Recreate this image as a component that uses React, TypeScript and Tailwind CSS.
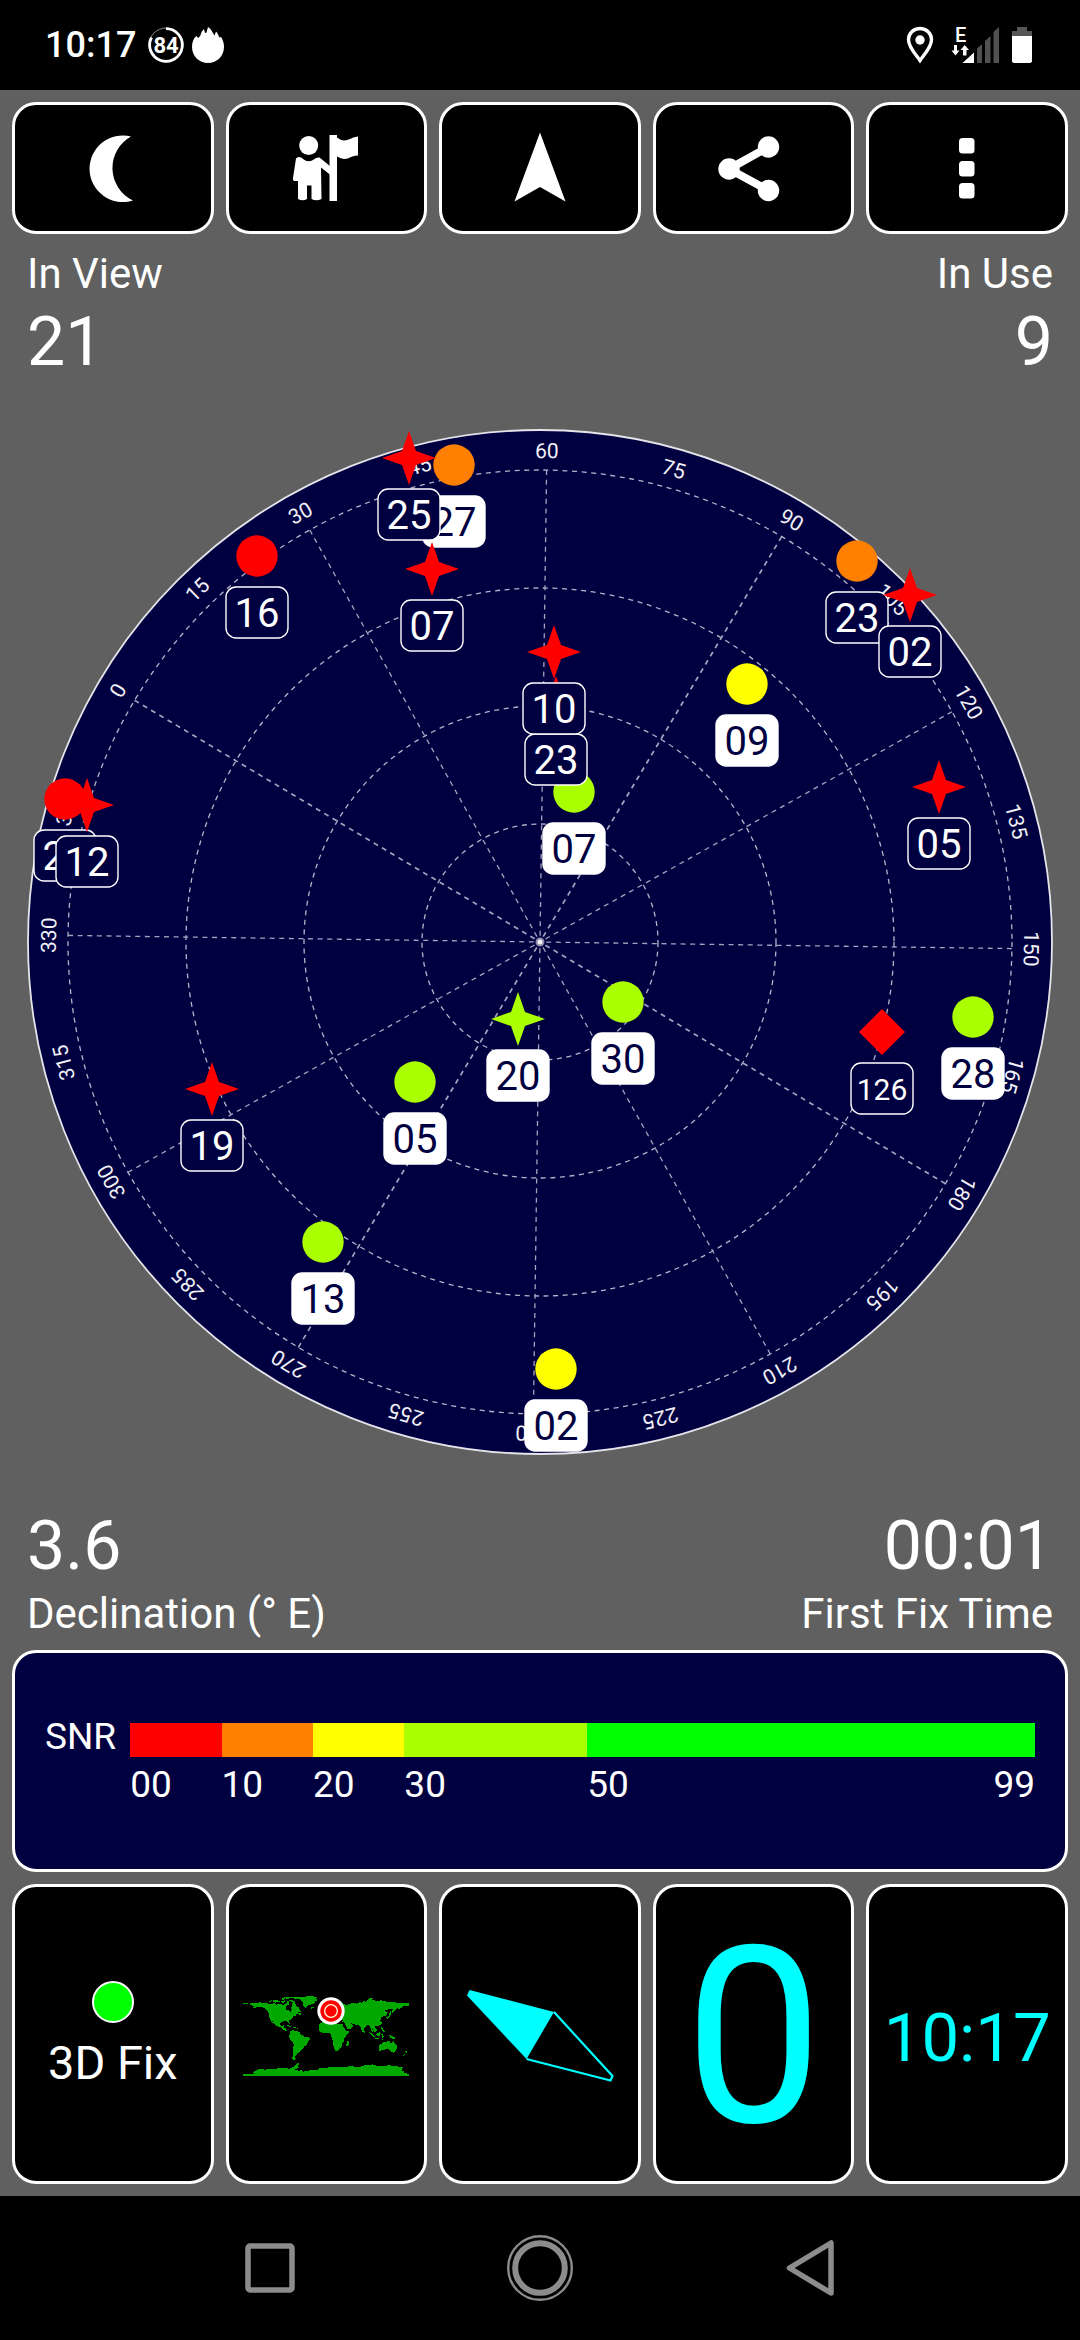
import React from "react";

type Shape = "circle" | "star" | "diamond";

interface Satellite {
  id: string;
  x: number;
  y: number;
  shape: Shape;
  color: string;
  used?: boolean;
}

const RED = "#ff0000";
const ORANGE = "#ff8000";
const YELLOW = "#ffff00";
const LIME = "#aaff00";
const NAVY = "#000040";

// Offsets from the dial centre, in drawing order.
const satellites: Satellite[] = [
  { id: "16", x: -283, y: -386, shape: "circle", color: RED },
  { id: "27", x: -86, y: -477, shape: "circle", color: ORANGE, used: true },
  { id: "25", x: -131, y: -484, shape: "star", color: RED },
  { id: "07", x: -108, y: -373, shape: "star", color: RED },
  { id: "24", x: -475, y: -143, shape: "circle", color: RED },
  { id: "12", x: -453, y: -137, shape: "star", color: RED },
  { id: "07", x: 34, y: -150, shape: "circle", color: LIME, used: true },
  { id: "23", x: 16, y: -239, shape: "star", color: RED },
  { id: "10", x: 14, y: -290, shape: "star", color: RED },
  { id: "09", x: 207, y: -258, shape: "circle", color: YELLOW, used: true },
  { id: "23", x: 317, y: -381, shape: "circle", color: ORANGE },
  { id: "02", x: 370, y: -347, shape: "star", color: RED },
  { id: "05", x: 399, y: -155, shape: "star", color: RED },
  { id: "20", x: -22, y: 77, shape: "star", color: LIME, used: true },
  { id: "30", x: 83, y: 60, shape: "circle", color: LIME, used: true },
  { id: "05", x: -125, y: 140, shape: "circle", color: LIME, used: true },
  { id: "13", x: -217, y: 300, shape: "circle", color: LIME, used: true },
  { id: "19", x: -328, y: 147, shape: "star", color: RED },
  { id: "126", x: 342, y: 90, shape: "diamond", color: RED },
  { id: "28", x: 433, y: 75, shape: "circle", color: LIME, used: true },
  { id: "02", x: 16, y: 427, shape: "circle", color: YELLOW, used: true },
];

const HEADING = -59.2;
const rings = [118, 236, 354, 472];
const spokes = Array.from({ length: 12 }, (_, i) => i * 30);
const ticks = Array.from({ length: 24 }, (_, i) => i * 15);

function Marker({ sat }: { sat: Satellite }) {
  const small = sat.id.length > 2;
  return (
    <g transform={`translate(${sat.x} ${sat.y})`}>
      {sat.shape === "circle" && <circle r="20.7" fill={sat.color} />}
      {sat.shape === "star" && (
        <path d="M0-27 7-7 27 0 7 7 0 27-7 7-27 0-7-7Z" fill={sat.color} />
      )}
      {sat.shape === "diamond" && <path d="M0-23 23 0 0 23-23 0Z" fill={sat.color} />}
      <rect
        x="-31"
        y="31"
        width="62"
        height="51"
        rx="10"
        fill={sat.used ? "#ffffff" : NAVY}
        stroke="#ffffff"
        strokeWidth="1.4"
      />
      <text
        y={small ? 68 : 71}
        textAnchor="middle"
        fontSize={small ? 30 : 40}
        fill={sat.used ? NAVY : "#ffffff"}
      >
        {sat.id}
      </text>
    </g>
  );
}

function SkyDial() {
  return (
    <svg
      viewBox="-540 -556 1080 1116"
      className="block w-full"
      role="img"
      aria-label="Satellite sky view"
    >
      <circle r="512" fill={NAVY} stroke="#e4e4ea" strokeWidth="1.8" />
      <g fill="none" stroke="#b4b4cc" strokeWidth="1.3" strokeDasharray="5 4.6">
        {rings.map((r) => (
          <circle key={r} r={r} />
        ))}
      </g>
      <g stroke="#a4a4c0" strokeDasharray="5 4.6">
        {spokes.map((a) => (
          <line
            key={a}
            y1="-472"
            strokeWidth={a % 90 === 0 ? 1.7 : 1.3}
            transform={`rotate(${a + HEADING})`}
          />
        ))}
      </g>
      <circle r="4.5" fill="#8c8cac" />
      <circle r="2.5" fill="#f0f0f4" />
      <g fill="#f0f0f6" fontSize="21" textAnchor="middle">
        {ticks.map((a) => (
          <text key={a} y="-484" transform={`rotate(${a + HEADING})`}>
            {a}
          </text>
        ))}
      </g>
      {satellites.map((s, i) => (
        <Marker key={i} sat={s} />
      ))}
    </svg>
  );
}

function StatusBar() {
  return (
    <header className="flex h-[90px] items-center justify-between bg-black pr-12 pl-[45px]">
      <div className="flex items-center">
        <span className="text-[36px] leading-[42px] font-medium">10:17</span>
        <svg className="ml-3 h-9 w-9" viewBox="0 0 36 36" role="img" aria-label="Battery 84 percent">
          <circle cx="18" cy="18" r="17" fill="none" stroke="#aaa" strokeWidth="0.8" />
          <path d="M18 1.7A16.3 16.3 0 1 1 3.5 10.5" fill="none" stroke="#fff" strokeWidth="2.8" />
          <text x="18" y="26" textAnchor="middle" fontSize="22" fontWeight="700" fill="#fff">
            84
          </text>
        </svg>
        <svg className="ml-2 h-9 w-8" viewBox="0 0 32 36" fill="#fff" aria-hidden="true">
          <path d="M16 36C7 36 0 29 0 20C0 15 1.500 11 4.500 9L6 11C8 10 9 7.500 9.500 5L12 2L13 6L14.500 5.500L16 0C19.500 2 20.500 5.500 22.500 8.500L24 4.500C26 6 26 8 27.500 10.500L29 10C31 13 32 16 32 20C32 29 25 36 16 36Z" />
        </svg>
      </div>
      <div className="flex items-center">
        <svg className="h-[38px] w-[28px]" viewBox="0 0 28 38" fill="none" aria-hidden="true">
          <path
            d="M14 2.500C7.500 2.500 2.500 7.500 2.500 13.800C2.500 21.500 11 30 14 34.500C17 30 25.500 21.500 25.500 13.800C25.500 7.500 20.500 2.500 14 2.500Z"
            stroke="#fff"
            strokeWidth="3.4"
          />
          <circle cx="14" cy="14" r="4.700" fill="#fff" />
        </svg>
        <svg className="ml-4 h-12 w-[50px]" viewBox="0 -6 50 48" fill="#fff" role="img" aria-label="Mobile signal E">
          <text x="5" y="15" fontSize="20" fontWeight="500">E</text>
          <path d="M4 18h3v5.500h2.500L5.500 28.500 1.500 23.500H4ZM13 28.500V23h-2.500L14.700 18 19 23h-2.500v5.500Z" />
          <path d="M12.500 36 24 25.500V36Z" />
          <path d="M27 21.500 32 17V36H27ZM35 14 40.500 9V36H35ZM43.500 5 49 0V36H43.500Z" fill="#515151" />
        </svg>
        <svg className="ml-3 h-9 w-5" viewBox="0 0 20 36" aria-hidden="true">
          <path d="M5 0h10v4h5v6H0V4h5Z" fill="#565656" />
          <path d="M0 9h20v25.500l-1.500 1.500H1.500L0 34.500Z" fill="#fff" />
        </svg>
      </div>
    </header>
  );
}

const toolbar: { label: string; icon: React.ReactNode }[] = [
  {
    label: "Night mode",
    icon: <path d="M58 6.500A33.300 33.300 0 1 0 60 70.500A36 36 0 0 1 58 6.500Z" />,
  },
  {
    label: "Tour guide",
    icon: (
      <>
        <circle cx="22.700" cy="15.500" r="9.500" />
        <path d="M10 28.500Q11 27 13 27Q15.500 27 17 29Q22.700 33.500 28.500 29Q30.500 27 33.500 27.500L44.500 36.500V45L35 37.500L35.500 69Q30.500 71.500 25.500 69V55.500H21V69Q16.500 71.500 12 69V51H8Q6.500 50.500 7 48Z" />
        <path d="M43.500 5H51V71H43.500Z" />
        <path d="M51 7.500Q57 12.500 64 9Q68 6.500 72 6.500V25.500Q69 25 65 27Q58 31 51 26.500Z" />
      </>
    ),
  },
  { label: "Navigate", icon: <path d="M40 2.500 65.500 71.500 40 57 14.500 71.500Z" /> },
  {
    label: "Share",
    icon: (
      <>
        <path d="M54.500 17 15 39 54.500 60.500" fill="none" stroke="currentColor" strokeWidth="8" />
        <circle cx="15" cy="39" r="10.700" />
        <circle cx="54.500" cy="17" r="10.700" />
        <circle cx="54.500" cy="60.500" r="10.700" />
      </>
    ),
  },
  {
    label: "Menu",
    icon: (
      <>
        <rect x="32" y="8" width="15.500" height="15.500" rx="3.500" />
        <rect x="32" y="31" width="15.500" height="15.500" rx="3.500" />
        <rect x="32" y="53" width="15.500" height="15.500" rx="3.500" />
      </>
    ),
  },
];

function Toolbar() {
  return (
    <nav className="grid grid-cols-5 gap-3 px-3 pt-3">
      {toolbar.map((b) => (
        <button
          key={b.label}
          type="button"
          aria-label={b.label}
          className="flex h-[132px] items-center justify-center rounded-3xl border-[3px] border-white bg-black"
        >
          <svg className="h-[76px] w-20" viewBox="0 0 80 76" fill="currentColor" aria-hidden="true">
            {b.icon}
          </svg>
        </button>
      ))}
    </nav>
  );
}

function Readout({
  label,
  value,
  right,
  below,
}: {
  label: string;
  value: string;
  right?: boolean;
  below?: boolean;
}) {
  return (
    <dl
      className={`flex ${below ? "flex-col-reverse" : "flex-col"} ${right ? "text-right" : "text-left"}`}
    >
      <dt className="text-[42px] leading-[48px]">{label}</dt>
      <dd className="text-[68px] leading-[88px]">{value}</dd>
    </dl>
  );
}

const snrBands = [
  { from: "00", span: 10, color: RED },
  { from: "10", span: 10, color: ORANGE },
  { from: "20", span: 10, color: YELLOW },
  { from: "30", span: 20, color: LIME },
  { from: "50", span: 49, color: "#00ff00", to: "99" },
];

function SnrLegend() {
  return (
    <section className="mx-3 flex h-[222px] gap-3.5 rounded-3xl border-[3px] border-white bg-[#000040] px-[30px] text-[37px] leading-[44px]">
      <h2 className="pt-[62px]">SNR</h2>
      <div className="flex grow pt-[70px]">
        {snrBands.map((b) => (
          <div key={b.from} className="min-w-0 basis-0" style={{ flexGrow: b.span }}>
            <div className="h-[34px]" style={{ backgroundColor: b.color }} />
            <div className="flex justify-between pt-1.5">
              <span>{b.from}</span>
              {b.to && <span>{b.to}</span>}
            </div>
          </div>
        ))}
      </div>
    </section>
  );
}

function WorldMap() {
  return (
    <svg className="w-[166px]" viewBox="22 45 498 242" role="img" aria-label="World map with current position">
      <g fill="#00a800" shapeRendering="crispEdges">
        <path d="M22 66H34L38 69H22ZM40 70 46 65 60 66 74 64 80 67H96L100 69 116 67 122 71 134 68 140 71 150 70 156 60 162 62 160 70 152 76 150 86 158 88 164 94 168 86 166 80 170 72 168 66 178 66 182 74 190 80 192 86 197 92 186 93 190 100 182 98 180 104 172 106 170 112 164 116 158 120 164 128 160 130 156 122 146 120 138 123 134 128 135 134 140 136 144 132 147 134 144 139 150 142 150 147 156 150 152 151 144 146 136 140 126 136 116 130 112 122 108 116 112 128 106 120 100 110 99 98 94 88 88 82 80 78 66 77 56 82 48 82 54 76 44 76 50 72Z" />
        <path d="M98 60 108 58 106 62 100 63ZM112 58 128 56 126 60 134 62 120 65 112 63ZM118 53 130 54 124 56ZM138 52 150 50 148 55 140 56ZM136 60 148 58 150 64 138 65ZM140 49 176 47 164 52 152 54 150 50ZM156 56 172 58 180 64 174 65 164 61ZM186 97 198 96 196 101 190 101Z" />
        <path d="M168 48 200 47 226 46 246 47 240 53 246 57 238 62 238 67 226 71 218 73 214 78 210 80 204 75 201 68 203 63 196 59 194 55 180 54 170 51Z" />
        <path d="M150 132 162 134 170 138 160 137ZM170 139 180 139 178 142ZM182 140 188 141 186 143Z" />
        <path d="M165 149 172 148 178 149 186 151 192 154 194 159 202 164 206 167 216 169 224 170 222 176 217 182 214 192 206 196 202 204 195 208 192 214 186 216 184 222 178 226 180 232 176 237 170 234 171 220 172 206 174 192 172 184 166 180 162 172 159 166 163 158Z" />
        <path d="M254 126 270 120 286 121 290 125 298 124 304 128 320 128 324 138 328 144 332 151 342 149 338 158 330 166 324 174 325 182 319 188 318 196 312 204 304 210 298 209 294 198 291 188 293 180 288 172 287 162 282 156 270 155 260 156 252 150 249 144 249 134ZM336 178 342 182 339 192 334 197 331 192 334 184Z" />
        <path d="M252 110 266 106 264 98 280 92 286 72 300 60 314 62 324 68 332 72 340 70 352 66 362 68 372 63 378 66 384 60 390 62 396 56 404 50 412 52 408 56 418 58 422 61 436 58 448 60 456 64 472 62 486 66 500 65 519 67V75L508 76 502 74 500 80 490 84 484 82 482 86 474 94 468 98 468 90 476 82 470 84 460 83 452 88 444 89 456 94 452 102 446 106 436 108 438 114 434 118 440 124 436 132 426 135 420 134 416 138 424 146 420 154 414 150 410 144 412 156 408 150 404 140 402 134 396 132 390 138 386 142 384 152 380 152 376 144 374 136 366 132 356 130 344 126 350 133 356 134 348 142 340 146 336 144 330 132 324 124 320 122 326 116 310 116 302 112 292 118 282 110 270 114 262 119 252 118ZM248 94 256 88 260 100 252 103ZM224 78 236 77 234 82 226 83Z" />
        <path d="M451 108 458 106 462 96 466 98 460 110 454 114ZM462 88 466 90 466 97 462 96ZM400 153 406 156 418 168 414 170 406 162ZM418 171 430 172 428 175 418 174ZM422 160 430 154 436 156 432 166 424 166ZM434 134 438 138 444 148 448 152 442 152 438 144ZM437 160 446 158 442 162 446 168 440 170ZM434 174 444 173 440 176ZM458 161 466 164 476 168 482 176 472 174 464 170ZM386 150 390 154 386 156Z" />
        <path d="M429 194 438 188 446 182 452 183 456 179 464 180 464 185 469 187 472 177 476 184 483 194 484 202 480 210 474 215 466 212 462 206 450 204 442 208 430 209ZM472 219 478 218 475 222ZM508 210 513 211 514 216 509 221 511 214ZM502 221 508 220 504 225Z" />
        <path d="M22 279H60L50 275 62 268 72 264 90 266 104 263 150 262 162 263 176 256 180 250 186 245 190 248 186 256 190 261 178 265 188 269 198 268 204 272 226 267 244 267 254 260 276 260 290 257 330 258 344 255 366 258 380 256 386 252 402 253 410 250 424 254 446 254 464 253 480 256 494 257 504 260 498 263 502 268 496 270 506 272 504 276 519 278V286H22Z" />
      </g>
      <circle cx="286" cy="90" r="41" fill="#fff" />
      <circle cx="286" cy="90" r="32" fill="#f00" />
      <circle cx="286" cy="90" r="19" fill="none" stroke="#ffffd8" strokeWidth="4" />
    </svg>
  );
}

function Compass() {
  return (
    <svg className="w-[160px]" viewBox="460 1980 160 108" role="img" aria-label="Compass needle">
      <path d="M469.500 1988 554 2010 526.500 2057 467 1993.500Z" fill="#0ff" />
      <path
        d="M554 2010 612.500 2074 610.500 2078.500 526.500 2057"
        fill="none"
        stroke="#0ff"
        strokeWidth="2.200"
      />
    </svg>
  );
}

function Tile({ label, children }: { label: string; children: React.ReactNode }) {
  return (
    <button
      type="button"
      aria-label={label}
      className="flex h-[300px] min-w-0 flex-col items-center justify-center rounded-3xl border-[3px] border-white bg-black pt-1"
    >
      {children}
    </button>
  );
}

function NavBar() {
  return (
    <footer className="grid h-36 grid-cols-3 items-center bg-black px-[135px] text-[#8c8c8c]">
      <button type="button" aria-label="Recent apps" className="flex justify-center">
        <svg className="h-[72px] w-[72px]" viewBox="0 0 72 72" fill="none" stroke="currentColor" strokeWidth="5.500" aria-hidden="true">
          <rect x="14" y="14" width="44" height="44" rx="2" />
        </svg>
      </button>
      <button type="button" aria-label="Home" className="flex justify-center">
        <svg className="h-[72px] w-[72px]" viewBox="0 0 72 72" fill="none" stroke="currentColor" aria-hidden="true">
          <circle cx="36" cy="36" r="31.800" strokeWidth="2.400" />
          <circle cx="36" cy="36" r="24.800" strokeWidth="6" />
        </svg>
      </button>
      <button type="button" aria-label="Back" className="flex justify-center">
        <svg
          className="h-[72px] w-[72px]"
          viewBox="0 0 72 72"
          fill="none"
          stroke="currentColor"
          strokeWidth="5.500"
          strokeLinejoin="round"
          aria-hidden="true"
        >
          <path d="M57 11V61L15.500 36Z" />
        </svg>
      </button>
    </footer>
  );
}

export default function App() {
  return (
    <div className="flex min-h-screen flex-col bg-[#606060] font-['Roboto',sans-serif] text-white">
      <StatusBar />
      <Toolbar />
      <main className="flex grow flex-col">
        <div className="flex justify-between px-[27px] pt-4">
          <Readout label="In View" value="21" />
          <Readout label="In Use" value="9" right />
        </div>
        <SkyDial />
        <div className="flex justify-between px-[27px] pb-3">
          <Readout label="Declination (° E)" value="3.6" below />
          <Readout label="First Fix Time" value="00:01" right below />
        </div>
        <SnrLegend />
        <div className="grid grid-cols-5 gap-3 p-3">
          <Tile label="3D Fix">
            <span className="h-[42px] w-[42px] rounded-full border-2 border-white bg-[#00ff00]" />
            <span className="pt-3 text-[47px] leading-[56px]">3D Fix</span>
          </Tile>
          <Tile label="World map">
            <WorldMap />
          </Tile>
          <Tile label="Compass">
            <Compass />
          </Tile>
          <Tile label="Speed 0">
            <span className="pt-1 text-[246px] leading-[288px] text-[#00ffff]">0</span>
          </Tile>
          <Tile label="Time 10:17">
            <span className="pt-1 text-[67px] leading-[78px] text-[#00ffff]">10:17</span>
          </Tile>
        </div>
      </main>
      <NavBar />
    </div>
  );
}
